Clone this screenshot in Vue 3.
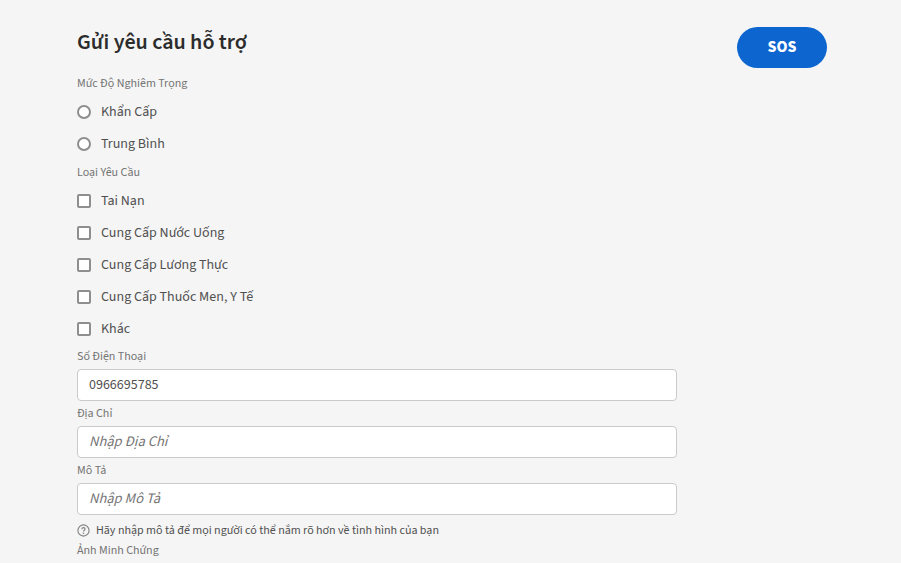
<script setup>
import { ref } from 'vue'

const severities = ['Khẩn Cấp', 'Trung Bình']
const requestTypes = [
  'Tai Nạn',
  'Cung Cấp Nước Uống',
  'Cung Cấp Lương Thực',
  'Cung Cấp Thuốc Men, Y Tế',
  'Khác',
]

const severity = ref('')
const types = ref([])
const phone = ref('0966695785')
const address = ref('')
const description = ref('')
</script>

<template>
  <main class="page">
    <header class="header">
      <h1 class="title">Gửi yêu cầu hỗ trợ</h1>
      <button type="button" class="sos">SOS</button>
    </header>

    <form class="form" @submit.prevent>
      <div class="section">
        <div role="radiogroup" aria-labelledby="severity-label">
          <div id="severity-label" class="label">Mức Độ Nghiêm Trọng</div>
          <label v-for="item in severities" :key="item" class="option">
            <input v-model="severity" type="radio" name="severity" :value="item" class="mark round" />
            <span>{{ item }}</span>
          </label>
        </div>
        <div role="group" aria-labelledby="type-label">
          <div id="type-label" class="label">Loại Yêu Cầu</div>
          <label v-for="item in requestTypes" :key="item" class="option">
            <input v-model="types" type="checkbox" :value="item" class="mark" />
            <span>{{ item }}</span>
          </label>
        </div>
      </div>

      <div class="section">
        <div>
          <label for="phone" class="label">Số Điện Thoại</label>
          <input id="phone" v-model="phone" type="tel" class="field" />
        </div>
        <div>
          <label for="address" class="label">Địa Chỉ</label>
          <input id="address" v-model="address" type="text" class="field" placeholder="Nhập Địa Chỉ" />
        </div>
        <div>
          <label for="description" class="label">Mô Tả</label>
          <input
            id="description"
            v-model="description"
            type="text"
            class="field"
            placeholder="Nhập Mô Tả"
            aria-describedby="description-help"
          />
          <p id="description-help" class="help">
            <svg class="help-icon" viewBox="0 0 13 13" aria-hidden="true">
              <circle cx="6.5" cy="6.5" r="5.6" />
              <path d="M4.9 5.2C4.9 4.2 5.6 3.6 6.5 3.6S8.1 4.2 8.1 5.1C8.1 6.2 6.5 6.3 6.5 7.5" />
              <circle class="dot" cx="6.5" cy="9.3" r="0.8" />
            </svg>
            <span>Hãy nhập mô tả để mọi người có thể nắm rõ hơn về tình hình của bạn</span>
          </p>
        </div>
      </div>
      <div class="label">Ảnh Minh Chứng</div>
    </form>
  </main>
</template>

<style>
body {
  margin: 0;
  background: #f5f5f5;
}
html {
  scrollbar-width: none;
}
</style>

<style scoped>
.page {
  box-sizing: border-box;
  padding: 27px 74px 0 77px;
  font-family: "Source Sans 3", "Source Sans Pro", "Noto Sans CJK SC", "Noto Sans", sans-serif;
  font-size: 14px;
  color: #505050;
}
.header {
  display: flex;
  align-items: flex-start;
  justify-content: space-between;
  height: 45px;
}
.title {
  margin: 0;
  font-size: 22px;
  line-height: 30px;
  font-weight: 600;
  color: #2c2c2c;
}
.sos {
  width: 90px;
  height: 41px;
  padding: 0 0 3px;
  border: 0;
  border-radius: 21px;
  background: #0d66d0;
  color: #fff;
  font: inherit;
  font-family: "Noto Sans CJK SC", sans-serif;
  font-size: 14px;
  font-weight: 900;
}
.form {
  max-width: 600px;
}
.section {
  display: flex;
  flex-direction: column;
  gap: 1px;
}
.label {
  display: block;
  font-size: 12px;
  line-height: 24px;
  color: #747474;
}
.option {
  display: flex;
  align-items: center;
  gap: 10px;
  height: 32px;
}
.mark {
  appearance: none;
  box-sizing: border-box;
  flex: none;
  width: 14px;
  height: 14px;
  margin: 0;
  border: 2px solid #8e8e8e;
  border-radius: 2px;
  background: #fff;
}
.mark.round {
  border-radius: 50%;
}
.mark:checked {
  border-color: #0d66d0;
  background: #0d66d0;
}
.field {
  display: block;
  box-sizing: border-box;
  width: 100%;
  height: 32px;
  padding: 0 11px;
  border: 1px solid #cacaca;
  border-radius: 4px;
  background: #fff;
  color: #505050;
  font: inherit;
}
.field::placeholder {
  color: #747474;
  font-family: "Noto Sans CJK SC", sans-serif;
  font-size: 13px;
  font-style: italic;
  opacity: 1;
}
.help {
  display: flex;
  align-items: center;
  gap: 6px;
  height: 24px;
  margin: 0;
  padding-top: 6px;
  box-sizing: border-box;
  font-size: 12px;
}
.help-icon {
  flex: none;
  width: 13px;
  height: 13px;
  fill: none;
  stroke: #808080;
  stroke-width: 1.1;
}
.help-icon .dot {
  fill: #808080;
  stroke: none;
}
</style>
